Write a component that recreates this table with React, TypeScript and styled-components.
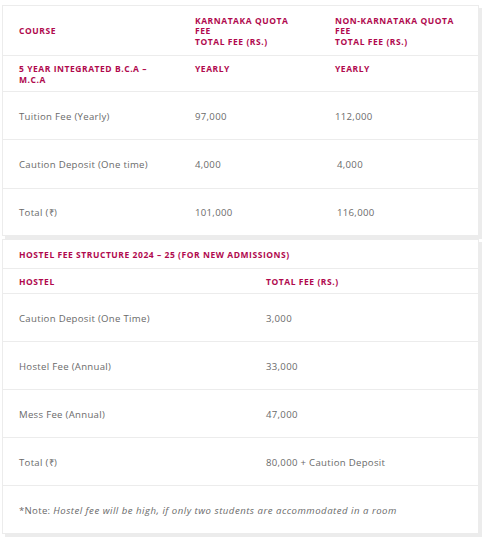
import React from "react";
import styled, { createGlobalStyle } from "styled-components";

const Global = createGlobalStyle`
  html, body { margin: 0; padding: 0; background: #fff; }
  body { font-family: "Open Sans", "Liberation Sans", sans-serif; }
`;

const Page = styled.div`
  padding: 5px 0 0 2px;
  width: 480px;
`;

const Table = styled.div<{ $cols: string }>`
  display: grid;
  grid-template-columns: ${(p) => p.$cols};
  width: 477px;
  box-sizing: border-box;
  border: 1px solid #ececec;
  border-bottom: none;
  box-shadow: 3px 3px 0 #ececec;
  margin-bottom: 3px;
  background: #fff;
`;

const Cell = styled.div<{ $h: number; $align?: "top" | "middle"; $span?: number; $indent?: number }>`
  box-sizing: border-box;
  min-height: ${(p) => p.$h}px;
  display: flex;
  flex-direction: column;
  justify-content: ${(p) => (p.$align === "top" ? "flex-start" : "center")};
  padding: ${(p) => (p.$align === "top" ? "8px" : "2px")} 8px 0 ${(p) => 16 + (p.$indent ?? 0)}px;
  border-bottom: 1px solid #ececec;
  grid-column: ${(p) => (p.$span ? `span ${p.$span}` : "auto")};
`;

const Head = styled.span`
  font-weight: 700;
  font-size: 8.5px;
  line-height: 10.5px;
  letter-spacing: 0.55px;
  color: #b0094e;
  text-transform: uppercase;
`;

const Body = styled.span`
  font-size: 9.6px;
  line-height: 12px;
  letter-spacing: 0.3px;
  color: #6a6a6a;
`;

const Italic = styled.em`
  font-style: italic;
  letter-spacing: 0.5px;
`;

export default function App() {
  const c1 = "176px 140px 159px";
  const c2 = "247px 228px";
  return (
    <Page>
      <Global />
      <Table $cols={c1}>
        <Cell $h={50}><Head>COURSE</Head></Cell>
        <Cell $h={50}><Head>KARNATAKA QUOTA<br />FEE<br />TOTAL FEE (RS.)</Head></Cell>
        <Cell $h={50}><Head>NON-KARNATAKA QUOTA<br />FEE<br />TOTAL FEE (RS.)</Head></Cell>

        <Cell $h={36} $align="top"><Head>5 YEAR INTEGRATED B.C.A –<br />M.C.A</Head></Cell>
        <Cell $h={36} $align="top"><Head>YEARLY</Head></Cell>
        <Cell $h={36} $align="top"><Head>YEARLY</Head></Cell>

        <Cell $h={48}><Body>Tuition Fee (Yearly)</Body></Cell>
        <Cell $h={48}><Body>97,000</Body></Cell>
        <Cell $h={48}><Body>112,000</Body></Cell>

        <Cell $h={49}><Body>Caution Deposit (One time)</Body></Cell>
        <Cell $h={49}><Body>4,000</Body></Cell>
        <Cell $h={49} $indent={2}><Body>4,000</Body></Cell>

        <Cell $h={47}><Body>Total (₹)</Body></Cell>
        <Cell $h={47}><Body>101,000</Body></Cell>
        <Cell $h={47} $indent={2}><Body>116,000</Body></Cell>
      </Table>

      <Table $cols={c2}>
        <Cell $h={29} $span={2}><Head>HOSTEL FEE STRUCTURE 2024 – 25 (FOR NEW ADMISSIONS)</Head></Cell>

        <Cell $h={25}><Head>HOSTEL</Head></Cell>
        <Cell $h={25}><Head>TOTAL FEE (RS.)</Head></Cell>

        <Cell $h={48}><Body>Caution Deposit (One Time)</Body></Cell>
        <Cell $h={48}><Body>3,000</Body></Cell>

        <Cell $h={48}><Body>Hostel Fee (Annual)</Body></Cell>
        <Cell $h={48}><Body>33,000</Body></Cell>

        <Cell $h={48}><Body>Mess Fee (Annual)</Body></Cell>
        <Cell $h={48}><Body>47,000</Body></Cell>

        <Cell $h={48}><Body>Total (₹)</Body></Cell>
        <Cell $h={48}><Body>80,000 + Caution Deposit</Body></Cell>

        <Cell $h={48} $span={2}>
          <Body>*Note: <Italic>Hostel fee will be high, if only two students are accommodated in a room</Italic></Body>
        </Cell>
      </Table>
    </Page>
  );
}
